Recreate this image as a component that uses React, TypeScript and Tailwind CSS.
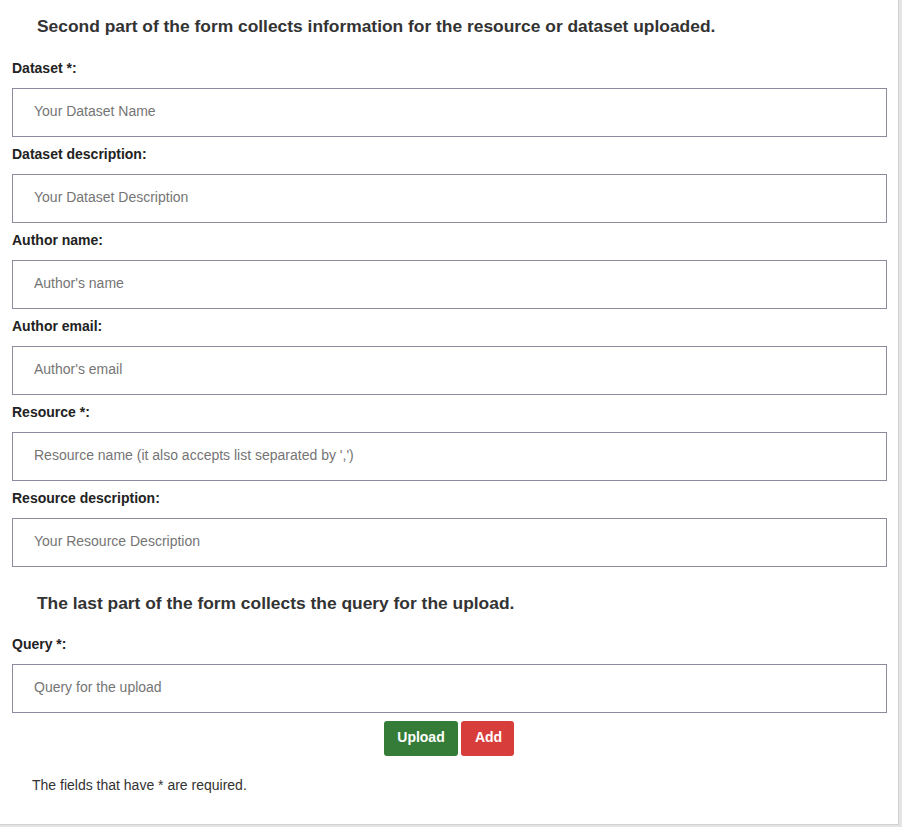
import React from "react";

const fields: { label: string; placeholder: string }[] = [
  { label: "Dataset *:", placeholder: "Your Dataset Name" },
  { label: "Dataset description:", placeholder: "Your Dataset Description" },
  { label: "Author name:", placeholder: "Author's name" },
  { label: "Author email:", placeholder: "Author's email" },
  { label: "Resource *:", placeholder: "Resource name (it also accepts list separated by ',')" },
  { label: "Resource description:", placeholder: "Your Resource Description" },
];

function Field({ label, placeholder }: { label: string; placeholder: string }) {
  return (
    <div className="flex flex-col">
      <label className="text-[14px] leading-[20px] font-bold text-[#222] h-[20px]">{label}</label>
      <input
        className="mt-[10px] h-[49px] w-[875px] border border-[#8e8a9e] bg-white pl-[21px] pb-[4px] text-[14px] text-[#333] placeholder:text-[#757575] outline-none"
        placeholder={placeholder}
      />
    </div>
  );
}

export default function App() {
  return (
    <div
      className="w-[902px] h-[827px] bg-[#e4e4e4] overflow-hidden"
      style={{ fontFamily: '"Liberation Sans", Arial, sans-serif' }}
    >
      <div className="w-[899px] h-[825px] bg-white border-r border-b border-[#d2d2d2] pl-[12px] pt-[16px] flex flex-col">
        <h4 className="pl-[25px] text-[17.4px] leading-[20px] font-bold text-[#333]">
          Second part of the form collects information for the resource or dataset uploaded.
        </h4>
        <div className="mt-[22px] flex flex-col gap-[7px]">
          {fields.map((f) => (
            <Field key={f.label} label={f.label} placeholder={f.placeholder} />
          ))}
        </div>
        <h4 className="mt-[26px] pl-[25px] text-[17.4px] leading-[20px] font-bold text-[#333]">
          The last part of the form collects the query for the upload.
        </h4>
        <div className="mt-[21px]">
          <Field label="Query *:" placeholder="Query for the upload" />
        </div>
        <div className="mt-[8px] w-[874px] flex justify-center gap-[3px]">
          <button className="h-[35px] w-[74px] rounded-[3px] bg-[#367c39] pb-[2px] text-white text-[14px] font-bold">
            Upload
          </button>
          <button className="h-[35px] w-[53px] rounded-[3px] bg-[#d73d3a] pb-[2px] pl-[2px] text-white text-[14px] font-bold">
            Add
          </button>
        </div>
        <p className="mt-[19px] pl-[20px] text-[14px] leading-[20px] text-[#333]">
          The fields that have * are required.
        </p>
      </div>
    </div>
  );
}
